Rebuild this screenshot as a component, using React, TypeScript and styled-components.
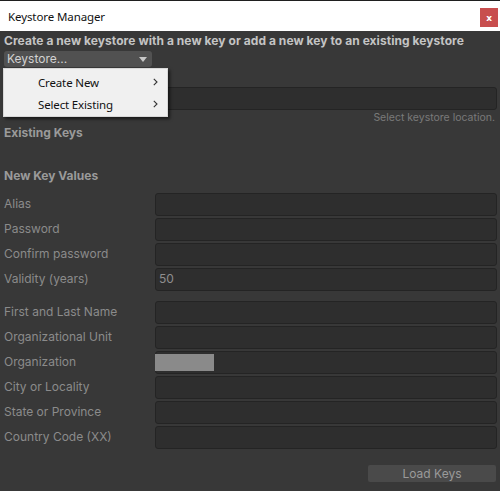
import React from 'react';
import styled, { createGlobalStyle } from 'styled-components';

const Global = createGlobalStyle`
  html, body { margin: 0; padding: 0; background: #383838; }
  body { font-family: Inter, "Noto Sans", sans-serif; }
`;

const Window = styled.div`
  width: 500px;
  height: 491px;
  box-sizing: border-box;
  display: flex;
  flex-direction: column;
  background: #383838;
  border-top: 1px solid #1f1f1f;
  overflow: hidden;
`;

const TitleBar = styled.div`
  height: 30px;
  flex: none;
  background: #ffffff;
  display: flex;
  align-items: center;
  justify-content: space-between;
  padding: 0 2px 0 8px;
  font-family: "Noto Sans", "Open Sans", sans-serif;
  font-size: 11.5px;
  letter-spacing: -0.1px;
  color: #111;
`;

const CloseButton = styled.div`
  width: 18px;
  height: 19px;
  margin-top: 3px;
  background: #c84e4e;
  color: #fff;
  font-family: "DejaVu Sans", sans-serif;
  font-size: 9px;
  font-weight: bold;
  display: flex;
  align-items: center;
  justify-content: center;
`;

const Body = styled.div`
  flex: 1;
  display: flex;
  flex-direction: column;
  padding: 0 3px 0 4px;
  font-size: 12px;
`;

const Header = styled.div`
  margin-top: 1px;
  line-height: 18px;
  font-weight: 700;
  letter-spacing: 0.06px;
  color: #c4c4c4;
  white-space: nowrap;
`;

const DropdownWrap = styled.div`
  position: relative;
  width: 148px;
  height: 16px;
  margin-top: 1px;
`;

const DropdownButton = styled.div`
  height: 16px;
  box-sizing: border-box;
  background: #515151;
  border-radius: 3px;
  color: #d2d2d2;
  line-height: 16px;
  padding: 0 5px 0 3px;
  display: flex;
  align-items: center;
  justify-content: space-between;
`;

const Caret = styled.span`
  width: 0;
  height: 0;
  border-left: 4px solid transparent;
  border-right: 4px solid transparent;
  border-top: 5px solid #c8c8c8;
`;

const Menu = styled.div`
  position: absolute;
  top: 17px;
  left: -1px;
  width: 165px;
  height: 49px;
  box-sizing: border-box;
  background: #f0f0f0;
  border: 1px solid #d8d8d8;
  box-shadow: 2px 2px 3px rgba(0, 0, 0, 0.55);
  display: flex;
  flex-direction: column;
  padding-top: 2px;
  font-family: "Noto Sans", "Open Sans", sans-serif;
  font-size: 11.5px;
  letter-spacing: -0.15px;
  color: #111;
  z-index: 5;
`;

const MenuItem = styled.div`
  height: 22px;
  display: flex;
  align-items: center;
  justify-content: space-between;
  padding: 0 9px 0 34px;
`;

const Chevron = () => (
  <svg width="5" height="8" viewBox="0 0 5 8">
    <path d="M0.8 0.8 L4 4 L0.8 7.2" fill="none" stroke="#333" strokeWidth="1.1" />
  </svg>
);

const PathField = styled.div`
  margin-top: 20px;
  height: 23px;
  box-sizing: border-box;
  background: #2e2e2e;
  border: 1px solid #242424;
  border-radius: 3px;
`;

const Hint = styled.div`
  line-height: 15px;
  text-align: right;
  font-size: 10.5px;
  color: #7a7a7a;
  padding-right: 2px;
`;

const SectionTitle = styled.div<{ $top: number }>`
  margin-top: ${(p) => p.$top}px;
  line-height: 16px;
  font-weight: 700;
  color: #9a9a9a;
`;

const Form = styled.div<{ $top: number }>`
  margin-top: ${(p) => p.$top}px;
  display: flex;
  flex-direction: column;
  gap: 2px;
`;

const Row = styled.div`
  display: grid;
  grid-template-columns: 151px 1fr;
  align-items: center;
  height: 23px;
`;

const Label = styled.div`
  color: #8b8b8b;
  white-space: nowrap;
  padding-bottom: 3px;
`;

const Field = styled.div`
  height: 23px;
  box-sizing: border-box;
  background: #2e2e2e;
  border: 1px solid #242424;
  border-radius: 3px;
  color: #8e8e8e;
  padding: 0 0 2px 3px;
  display: flex;
  align-items: center;
`;

const Selection = styled.div`
  width: 59px;
  height: 17px;
  margin: 2px 0 0 -4px;
  background: #8a8a8a;
`;

const LoadButton = styled.div`
  align-self: flex-end;
  margin-top: 16px;
  margin-right: 1px;
  width: 128px;
  height: 17px;
  background: #4a4a4a;
  border-radius: 2px;
  color: #9a9a9a;
  display: flex;
  align-items: center;
  justify-content: center;
`;

const keyRows = [
  { label: 'Alias', value: '' },
  { label: 'Password', value: '' },
  { label: 'Confirm password', value: '' },
  { label: 'Validity (years)', value: '50' },
];

const ownerRows = [
  'First and Last Name',
  'Organizational Unit',
  'Organization',
  'City or Locality',
  'State or Province',
  'Country Code (XX)',
];

export default function App() {
  return (
    <>
      <Global />
      <Window>
        <TitleBar>
          <span>Keystore Manager</span>
          <CloseButton>x</CloseButton>
        </TitleBar>
        <Body>
          <Header>Create a new keystore with a new key or add a new key to an existing keystore</Header>
          <DropdownWrap>
            <DropdownButton>
              <span>Keystore...</span>
              <Caret />
            </DropdownButton>
            <Menu>
              <MenuItem>
                <span>Create New</span>
                <Chevron />
              </MenuItem>
              <MenuItem>
                <span>Select Existing</span>
                <Chevron />
              </MenuItem>
            </Menu>
          </DropdownWrap>
          <PathField />
          <Hint>Select keystore location.</Hint>
          <SectionTitle $top={0}>Existing Keys</SectionTitle>
          <SectionTitle $top={27}>New Key Values</SectionTitle>
          <Form $top={9}>
            {keyRows.map((r) => (
              <Row key={r.label}>
                <Label>{r.label}</Label>
                <Field>{r.value}</Field>
              </Row>
            ))}
          </Form>
          <Form $top={10}>
            {ownerRows.map((l) => (
              <Row key={l}>
                <Label>{l}</Label>
                <Field>{l === 'Organization' ? <Selection /> : null}</Field>
              </Row>
            ))}
          </Form>
          <LoadButton>Load Keys</LoadButton>
        </Body>
      </Window>
    </>
  );
}
